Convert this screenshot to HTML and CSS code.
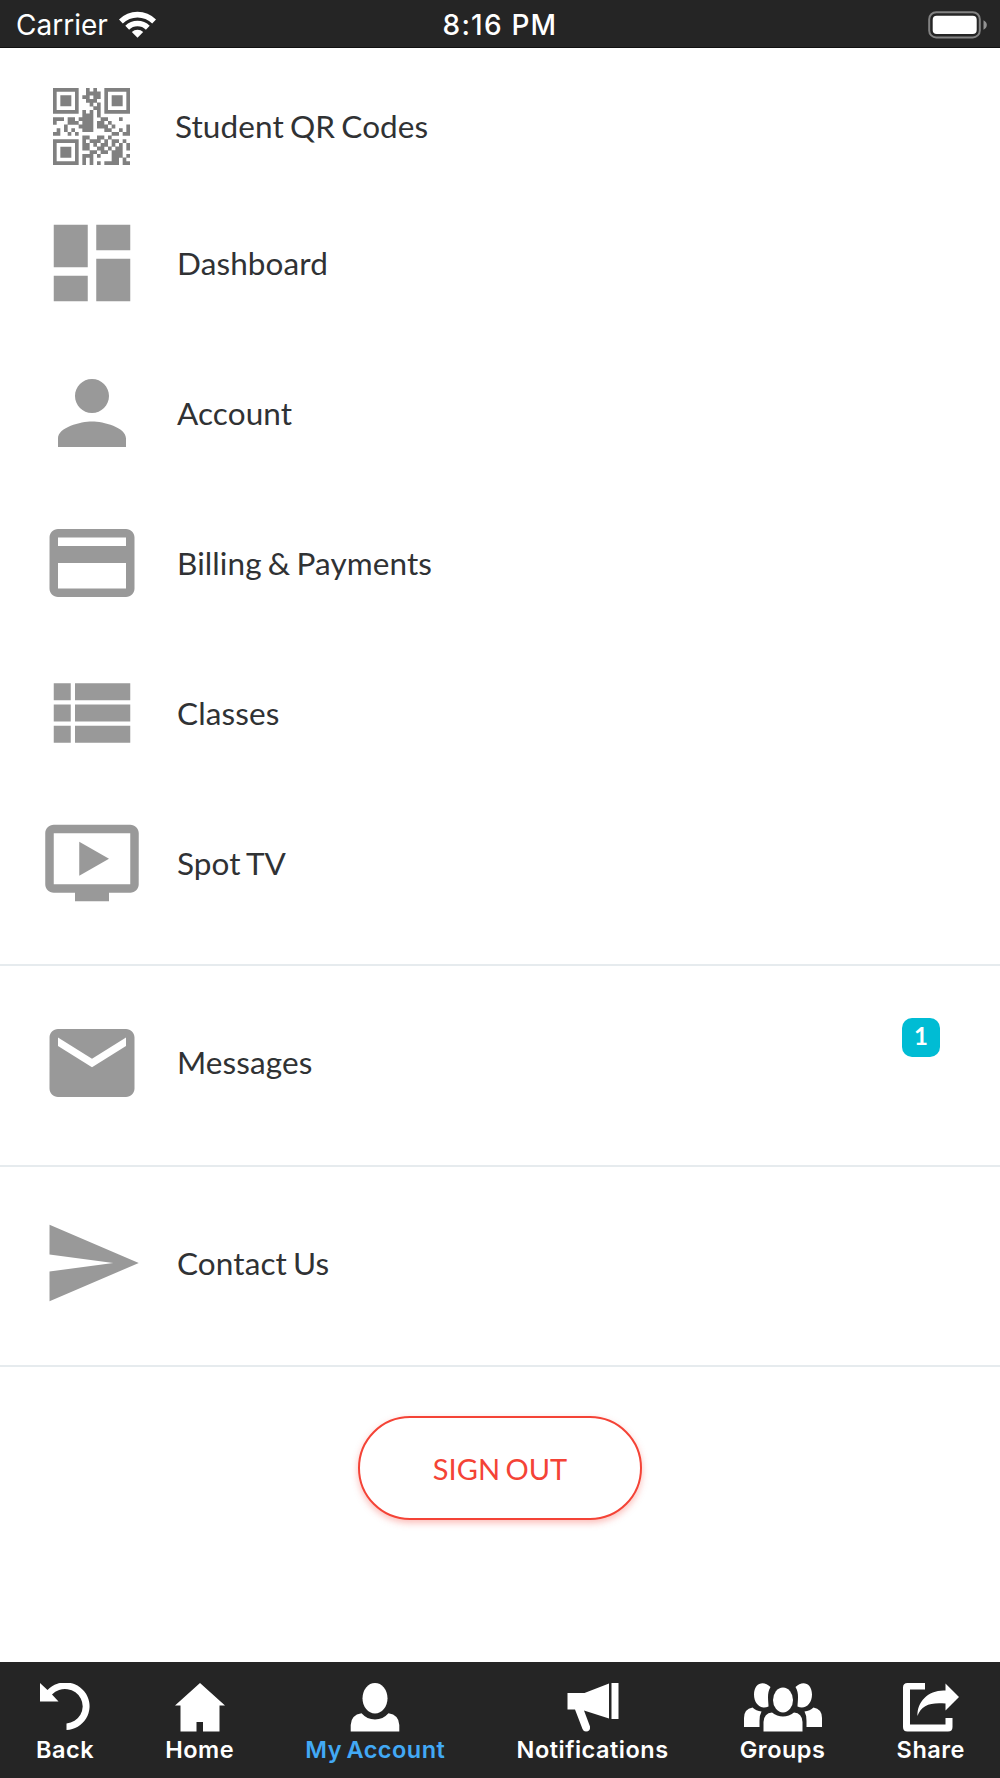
FILE: index.html
```html
<!DOCTYPE html>
<html>
<head>
	<meta charset="utf-8">
	<title>My Account</title>
	<link rel="stylesheet" href="styles.css">
</head>
<body>
<div class="app">
	<div class="status">
		<div class="carrier">
			<span>Carrier</span>
			<svg class="wifi" viewBox="0 0 37 28">
				<path d="M0 9.5A26 26 0 0 1 37 9.5L33.200 13.500A20.800 20.800 0 0 0 3.800 13.500Z"/>
				<path d="M6.300 15.800A17.300 17.300 0 0 1 30.700 15.800L26.900 19.700A12 12 0 0 0 10.100 19.700Z"/>
				<path d="M12.800 22A8.300 8.300 0 0 1 24.200 22L18.500 27.700Z"/>
			</svg>
		</div>
		<div class="time">8:16 PM</div>
		<svg class="battery" viewBox="0 0 60 28">
			<rect x="1.200" y="1.200" width="50.600" height="25.200" rx="7" fill="none" stroke="#838383" stroke-width="2"/>
			<rect x="4.700" y="4.800" width="44" height="18.200" rx="4" fill="#fff"/>
			<path d="M55.500 9.300Q58.800 11 58.800 14T55.500 18.700Z" fill="#929292"/>
		</svg>
	</div>

	<div class="menu">
		<div class="item qr">
			<svg class="icon" viewBox="0 0 21 21">
				<path fill="#808080" fill-rule="evenodd" d="M0 0h7v7h-7zM1 1v5h5v-5zM14 0h7v7h-7zM15 1v5h5v-5zM0 14h7v7h-7zM1 15v5h5v-5zM2 2h3v3h-3zM16 2h3v3h-3zM2 16h3v3h-3z"/>
				<path stroke="#808080" stroke-width="1.050" d="M9 .5h1M11 .5h1M9 1.500h4M8 2.500h2M11 2.500h2M9 3.500h3M10 4.500h1M12 4.500h1M11 5.500h2M8 6.500h1M10 6.500h1M12 6.500h1M8 7.500h3M12 7.500h1M0 8.500h3M4 8.500h2M7 8.500h4M13 8.500h2M18 8.500h1M0 9.500h1M4 9.500h3M8 9.500h3M12 9.500h2M15 9.500h1M3 10.500h1M7 10.500h4M12 10.500h3M16 10.500h1M20 10.500h1M1 11.500h1M3 11.500h1M5 11.500h1M8 11.500h3M14 11.500h2M18 11.500h1M20 11.500h1M0 12.500h2M4 12.500h1M6 12.500h1M16 12.500h2M19 12.500h2M8 13.500h2M12 13.500h2M15 13.500h1M8 14.500h1M10 14.500h3M14 14.500h1M16 14.500h2M19 14.500h1M8 15.500h2M11 15.500h1M13 15.500h2M16 15.500h1M18 15.500h1M20 15.500h1M8 16.500h2M12 16.500h2M15 16.500h1M17 16.500h2M20 16.500h1M10 17.500h2M13 17.500h2M16 17.500h3M8 18.500h3M12 18.500h1M16 18.500h3M20 18.500h1M8 19.500h1M10 19.500h1M16 19.500h2M19 19.500h1M8 20.500h1M10 20.500h1M12 20.500h1M14 20.500h4M19 20.500h2"/>
			</svg>
			<span class="label">Student QR Codes</span>
		</div>
		<div class="item">
			<svg class="icon" viewBox="0 0 24 24"><path d="M3 13h8V3H3v10zm0 8h8v-6H3v6zm10 0h8V11h-8v10zm0-18v6h8V3h-8z"/></svg>
			<span class="label">Dashboard</span>
		</div>
		<div class="item">
			<svg class="icon" viewBox="0 0 24 24"><path d="M12 12c2.210 0 4-1.790 4-4s-1.790-4-4-4-4 1.790-4 4 1.790 4 4 4zm0 2c-2.670 0-8 1.340-8 4v2h16v-2c0-2.660-5.330-4-8-4z"/></svg>
			<span class="label">Account</span>
		</div>
		<div class="item">
			<svg class="icon" viewBox="0 0 24 24"><path d="M20 4H4c-1.110 0-1.990.89-1.990 2L2 18c0 1.110.89 2 2 2h16c1.110 0 2-.89 2-2V6c0-1.110-.89-2-2-2zm0 14H4v-6h16v6zm0-10H4V6h16v2z"/></svg>
			<span class="label">Billing &amp; Payments</span>
		</div>
		<div class="item">
			<svg class="icon" viewBox="0 0 24 24"><path d="M3 14h4v-4H3v4zm0 5h4v-4H3v4zM3 9h4V5H3v4zm5 5h13v-4H8v4zm0 5h13v-4H8v4zM8 5v4h13V5H8z"/></svg>
			<span class="label">Classes</span>
		</div>
		<div class="item">
			<svg class="icon" viewBox="0 0 24 24"><path d="M21 3H3c-1.110 0-2 .89-2 2v12c0 1.100.89 2 2 2h5v2h8v-2h5c1.100 0 1.990-.9 1.990-2L23 5c0-1.110-.9-2-2-2zm0 14H3V5h18v12zm-5-6l-7 4V7z"/></svg>
			<span class="label">Spot TV</span>
		</div>
	</div>
	<div class="menu single">
		<div class="item">
			<svg class="icon" viewBox="0 0 24 24"><path d="M20 4H4c-1.100 0-1.990.9-1.990 2L2 18c0 1.100.9 2 2 2h16c1.100 0 2-.9 2-2V6c0-1.100-.9-2-2-2zm0 4l-8 5-8-5V6l8 5 8-5v2z"/></svg>
			<span class="label">Messages</span>
			<span class="badge">1</span>
		</div>
	</div>
	<div class="menu single">
		<div class="item">
			<svg class="icon" viewBox="0 0 24 24"><path d="M2.010 21L23 12 2.010 3 2 10l15 2-15 2z"/></svg>
			<span class="label">Contact Us</span>
		</div>
	</div>

	<div class="signout"><button>SIGN OUT</button></div>

	<div class="tabs">
		<div class="tab">
			<svg width="50" height="49" viewBox="0 0 50 49">
				<path d="M0 0L7.500 7A24.300 23.800 0 1 1 26.500 47V40.500A17.700 17.300 0 1 0 12 11.500L18.500 18.500H0Z"/>
			</svg>
			<span>Back</span>
		</div>
		<div class="tab">
			<svg width="50" height="49" viewBox="0 0 50 49">
				<path d="M25 0L50 22.500H44.500V48.500H28V39H21.500V48.500H5.500V22.500H0Z"/>
			</svg>
			<span>Home</span>
		</div>
		<div class="tab active">
			<svg width="50" height="49" viewBox="0 0 50 49">
				<ellipse cx="25" cy="15.300" rx="12.500" ry="15.300"/>
				<path d="M.7 48.500V42Q1 32 11.500 30.300Q17 36.500 25 36.500T38.500 30.300Q49 32 49.300 42V48.500Z"/>
			</svg>
			<span>My Account</span>
		</div>
		<div class="tab">
			<svg width="52" height="49" viewBox="0 0 52 49">
				<path d="M.5 10H17.500L42 .5V35.500L17 27.500L23 43.500Q23.500 48.500 19 48.500Q16.500 48.500 15.500 46L8 26.500H.5ZM44.500 0H51.500V36H44.500Z"/>
			</svg>
			<span>Notifications</span>
		</div>
		<div class="tab">
			<svg width="78" height="49" viewBox="0 0 78 49">
				<path d="M26.500 4C20-3 10-.5 10 11.500C10 21 17 27 24.500 23.500C24.500 19 22.500 10 26.500 4ZM51.500 4C58-3 68-.5 68 11.500C68 21 61 27 53.500 23.500C53.500 19 55.500 10 51.500 4Z"/>
				<ellipse cx="39" cy="17" rx="10" ry="12.500"/>
				<path d="M0 44V35Q0 26 8.500 24.500Q12 28 17.500 28.500Q15.500 32 15.500 38V44ZM78 44V35Q78 26 69.500 24.500Q66 28 60.500 28.500Q62.500 32 62.500 38V44ZM19.500 48.500V39Q20 30 28 29.500Q33 33.500 39 33.500T50 29.500Q58 30 58.500 39V48.500Z"/>
			</svg>
			<span>Groups</span>
		</div>
		<div class="tab">
			<svg width="56" height="49" viewBox="0 0 56 49">
				<path d="M22 0V6.500H7V41.500H42.500V35H49.500V44Q49.500 48.500 45 48.500H4.500Q0 48.500 0 44V4.500Q0 0 4.500 0Z"/>
				<path d="M42.500 .5L56 14L42.500 27.500V20.500C28 19 18 22 14.500 33C14 18 26 6.500 42.500 7.500Z"/>
			</svg>
			<span>Share</span>
		</div>
	</div>
</div>
</body>
</html>
```
FILE: styles.css
```css
body{
	margin: 0;
	background: #fff;
	font-family: Lato,sans-serif;
	color: #303234;
}
svg{
	display: block;
	flex: none;
}
.app{
	display: flex;
	flex-direction: column;
	height: 1778px;
}
.status{
	display: grid;
	grid-template-columns: 1fr auto 1fr;
	align-items: center;
	box-sizing: border-box;
	height: 48px;
	padding: 3px 12px 0;
	background: #252525;
	border-bottom: 1px solid #111;
	color: #fff;
	font: 28px/40px Inter,sans-serif;
}
.carrier{
	display: flex;
	align-items: center;
	gap: 11px;
	padding-left: 4px;
}
.wifi{
	width: 37px;
	height: 28px;
	margin-top: -3px;
	fill: #fff;
}
.time{
	font-weight: 500;
	letter-spacing: 1.2px;
}
.battery{
	width: 60px;
	height: 28px;
	margin-top: -1px;
	justify-self: end;
}
.menu{
	padding-bottom: 26px;
	border-bottom: 2px solid #e6ebee;
}
.single{
	padding: 21.5px 0 27px;
}
.item{
	display: flex;
	align-items: center;
	height: 150px;
	padding: 0 60px 0 41px;
	font-size: 31.5px;
	letter-spacing: .1px;
	word-spacing: -2px;
}
.item .icon{
	width: 102px;
	height: 102px;
	margin-right: 34px;
	fill: #999;
}
.item.qr{
	height: 124px;
	padding: 16px 0 0 53px;
}
.qr .icon{
	width: 77px;
	height: 77px;
	margin: 0 45px 0 0;
}
.label{
	margin-bottom: 1px;
}
.badge{
	width: 38px;
	height: 39px;
	margin: 0 0 50px auto;
	border-radius: 10px;
	background: #00bcd4;
	color: #fff;
	font-size: 24px;
	font-weight: bold;
	line-height: 36px;
	text-align: center;
}
.signout{
	padding-top: 49px;
	text-align: center;
}
.signout button{
	width: 284px;
	height: 104px;
	border: 2px solid #f44336;
	border-radius: 52px;
	background: #fff;
	box-shadow: 0 3px 7px rgba(244,67,54,.35);
	color: #f44336;
	font: 29px Lato,sans-serif;
	word-spacing: -2px;
}
.tabs{
	display: flex;
	justify-content: space-between;
	box-sizing: border-box;
	height: 116px;
	margin-top: auto;
	padding: 21px 35px 0 36px;
	background: #252525;
	color: #fff;
	font: 600 23.5px/30px Inter,sans-serif;
	letter-spacing: .5px;
	word-spacing: -2px;
}
.tab{
	display: flex;
	flex-direction: column;
	align-items: center;
	gap: 3px;
}
.tab svg{
	fill: #fff;
}
.active{
	color: #42a9f5;
}
```
